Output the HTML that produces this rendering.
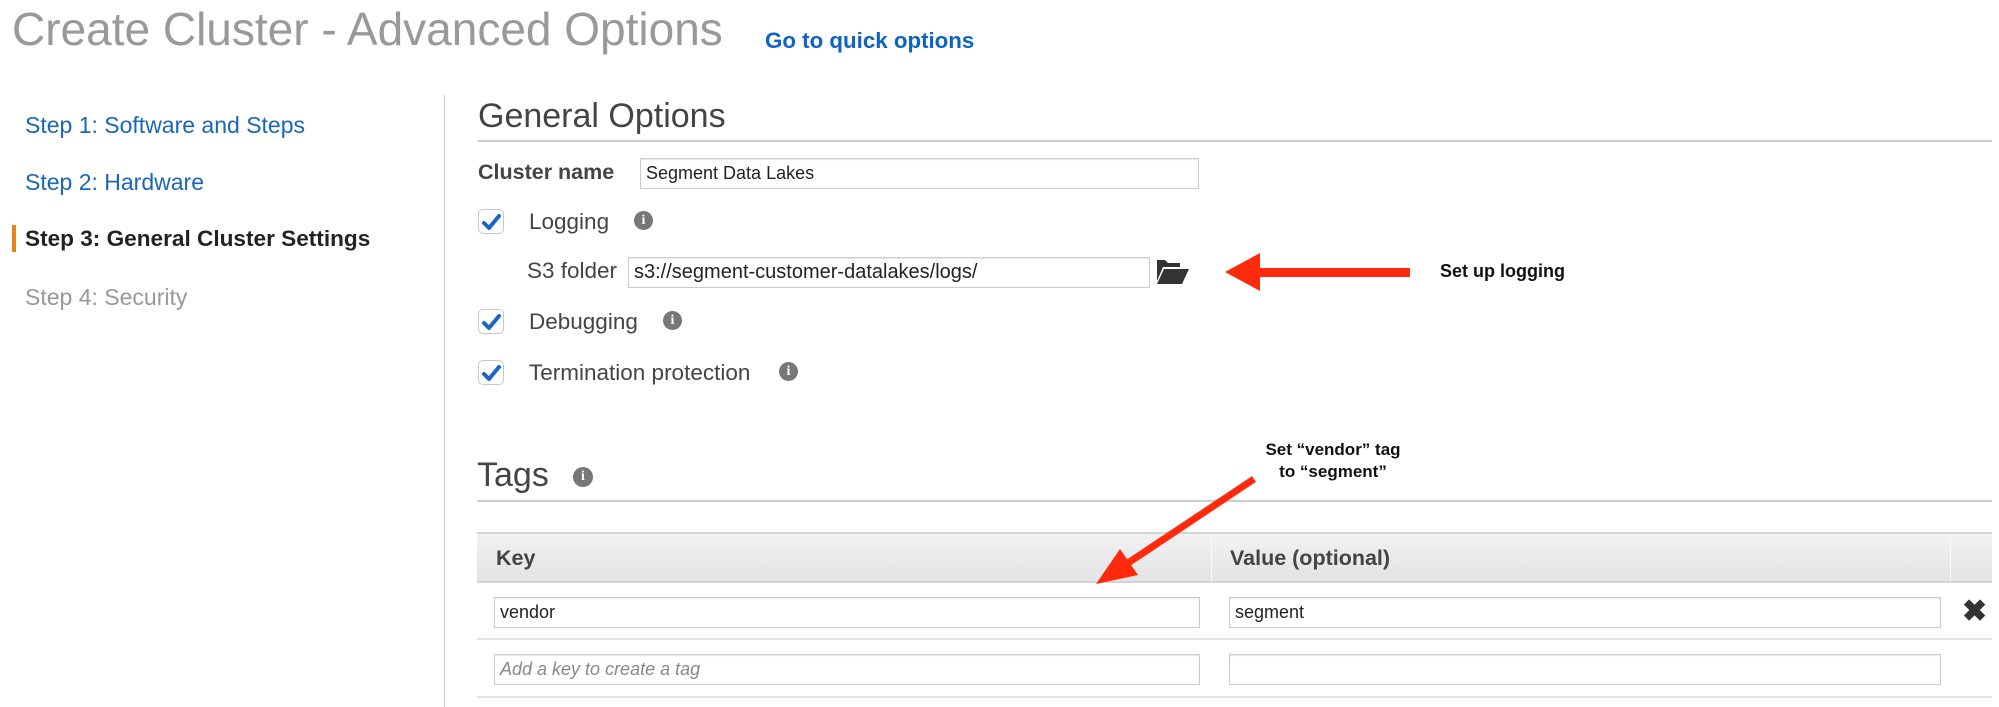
<!DOCTYPE html>
<html><head><meta charset="utf-8"><style>
*{margin:0;padding:0;box-sizing:border-box}
body{width:1999px;height:707px;background:#fff;position:relative;overflow:hidden;font-family:"Liberation Sans",Arial,sans-serif;color:#333}
.a{position:absolute;white-space:nowrap}
.inp{position:absolute;border:1px solid #ccc;box-shadow:inset 0 1px 1px #e8e8e8;background:#fff;font-size:18px;color:#222;padding-left:5px;display:flex;align-items:center}
.cb{position:absolute;width:26px;height:25px;border:1px solid #c8c8c8;border-radius:5px;background:#fff}
.info{position:absolute;width:19px;height:19px;border-radius:50%;background:#777;color:#fff;font:bold 14px "Liberation Serif",serif;text-align:center;line-height:19px}
.lbl{font-size:22.5px;color:#444}
</style></head><body>
<div class="a" style="left:12px;top:2px;font-size:46px;color:#999">Create Cluster - Advanced Options</div>
<div class="a" style="left:765px;top:28px;font-size:22.3px;font-weight:bold;color:#0e63c4">Go to quick options</div>

<div class="a" style="left:444px;top:95px;width:1px;height:612px;background:#ccc"></div>
<div class="a" style="left:25px;top:112px;font-size:23px;color:#1a66b8">Step 1: Software and Steps</div>
<div class="a" style="left:25px;top:169px;font-size:23px;color:#1a66b8">Step 2: Hardware</div>
<div class="a" style="left:12px;top:225px;width:4px;height:27px;background:#e8841c"></div>
<div class="a" style="left:25px;top:226px;font-size:22.6px;font-weight:bold;color:#222">Step 3: General Cluster Settings</div>
<div class="a" style="left:25px;top:284px;font-size:23px;color:#999">Step 4: Security</div>

<div class="a" style="left:478px;top:97px;font-size:34px;color:#444">General Options</div>
<div class="a" style="left:478px;top:140px;width:1514px;height:2px;background:#ccc"></div>
<div class="a" style="left:478px;top:160px;font-size:21.5px;font-weight:bold;color:#444">Cluster name</div>
<div class="inp" style="left:640px;top:158px;width:559px;height:31px">Segment Data Lakes</div>

<svg width="0" height="0" style="position:absolute"><defs><path id="ck" d="M5 13 L10 18 L20 6" stroke="#1a66c8" stroke-width="4" fill="none" stroke-linecap="round" stroke-linejoin="round"/></defs></svg>

<div class="cb" style="left:478px;top:209px"><svg width="24" height="23"><use href="#ck"/></svg></div>
<div class="a lbl" style="left:529px;top:209px">Logging</div>
<div class="info" style="left:634px;top:211px">i</div>

<div class="a lbl" style="left:527px;top:258px">S3 folder</div>
<div class="inp" style="left:628px;top:257px;width:522px;height:31px;font-size:20px">s3://segment-customer-datalakes/logs/</div>
<svg class="a" style="left:1156px;top:257px" width="34" height="28" viewBox="0 0 34 28"><path d="M1 3 H9 L12 6 H24 V10 H7 L1 24 Z" fill="#333"/><path d="M8 12 H33 L26 27 H1 Z" fill="#333"/></svg>

<svg class="a" style="left:1220px;top:250px" width="195" height="42"><polygon points="5,22 40,3 40,18 190,18 190,27 40,27 40,41" fill="#ff2a0c"/></svg>
<div class="a" style="left:1440px;top:261px;font-size:18px;font-weight:bold;color:#111">Set up logging</div>

<div class="cb" style="left:478px;top:309px"><svg width="24" height="23"><use href="#ck"/></svg></div>
<div class="a lbl" style="left:529px;top:309px">Debugging</div>
<div class="info" style="left:663px;top:311px">i</div>

<div class="cb" style="left:478px;top:360px"><svg width="24" height="23"><use href="#ck"/></svg></div>
<div class="a lbl" style="left:529px;top:360px">Termination protection</div>
<div class="info" style="left:779px;top:362px">i</div>

<div class="a" style="left:477px;top:456px;font-size:34px;color:#444">Tags</div>
<div class="info" style="left:573px;top:467px;width:20px;height:20px;line-height:20px">i</div>
<div class="a" style="left:477px;top:500px;width:1515px;height:2px;background:#ccc"></div>

<div class="a" style="left:1333px;top:439px;font-size:17px;font-weight:bold;color:#111;text-align:center;transform:translateX(-50%);line-height:22px">Set “vendor” tag<br>to “segment”</div>

<div class="a" style="left:477px;top:532px;width:1515px;height:51px;background:linear-gradient(#f2f2f2,#e3e3e3);border-top:2px solid #d4d4d4;border-bottom:2px solid #d4d4d4"></div>
<div class="a" style="left:1211px;top:534px;width:1px;height:47px;background:#fafafa"></div>
<div class="a" style="left:1950px;top:534px;width:1px;height:47px;background:#fafafa"></div>
<div class="a" style="left:496px;top:546px;font-size:21.5px;font-weight:bold;color:#444">Key</div>
<div class="a" style="left:1230px;top:546px;font-size:21.5px;font-weight:bold;color:#444">Value (optional)</div>

<div class="inp" style="left:494px;top:597px;width:706px;height:31px">vendor</div>
<div class="inp" style="left:1229px;top:597px;width:712px;height:31px">segment</div>
<div class="a" style="left:1962px;top:597px;font-size:30px;font-weight:bold;color:#333;line-height:30px">✖</div>
<div class="a" style="left:477px;top:638px;width:1515px;height:2px;background:#e4e4e4"></div>
<div class="inp" style="left:494px;top:654px;width:706px;height:31px;color:#888;font-style:italic">Add a key to create a tag</div>
<div class="inp" style="left:1229px;top:654px;width:712px;height:31px"></div>
<div class="a" style="left:477px;top:696px;width:1515px;height:2px;background:#e4e4e4"></div>

<svg class="a" style="left:0;top:0" width="1999" height="707"><line x1="1254" y1="479" x2="1128" y2="563" stroke="#ff2a0c" stroke-width="7"/><polygon points="1096,584 1138,575 1120,549" fill="#ff2a0c"/></svg>
</body></html>
